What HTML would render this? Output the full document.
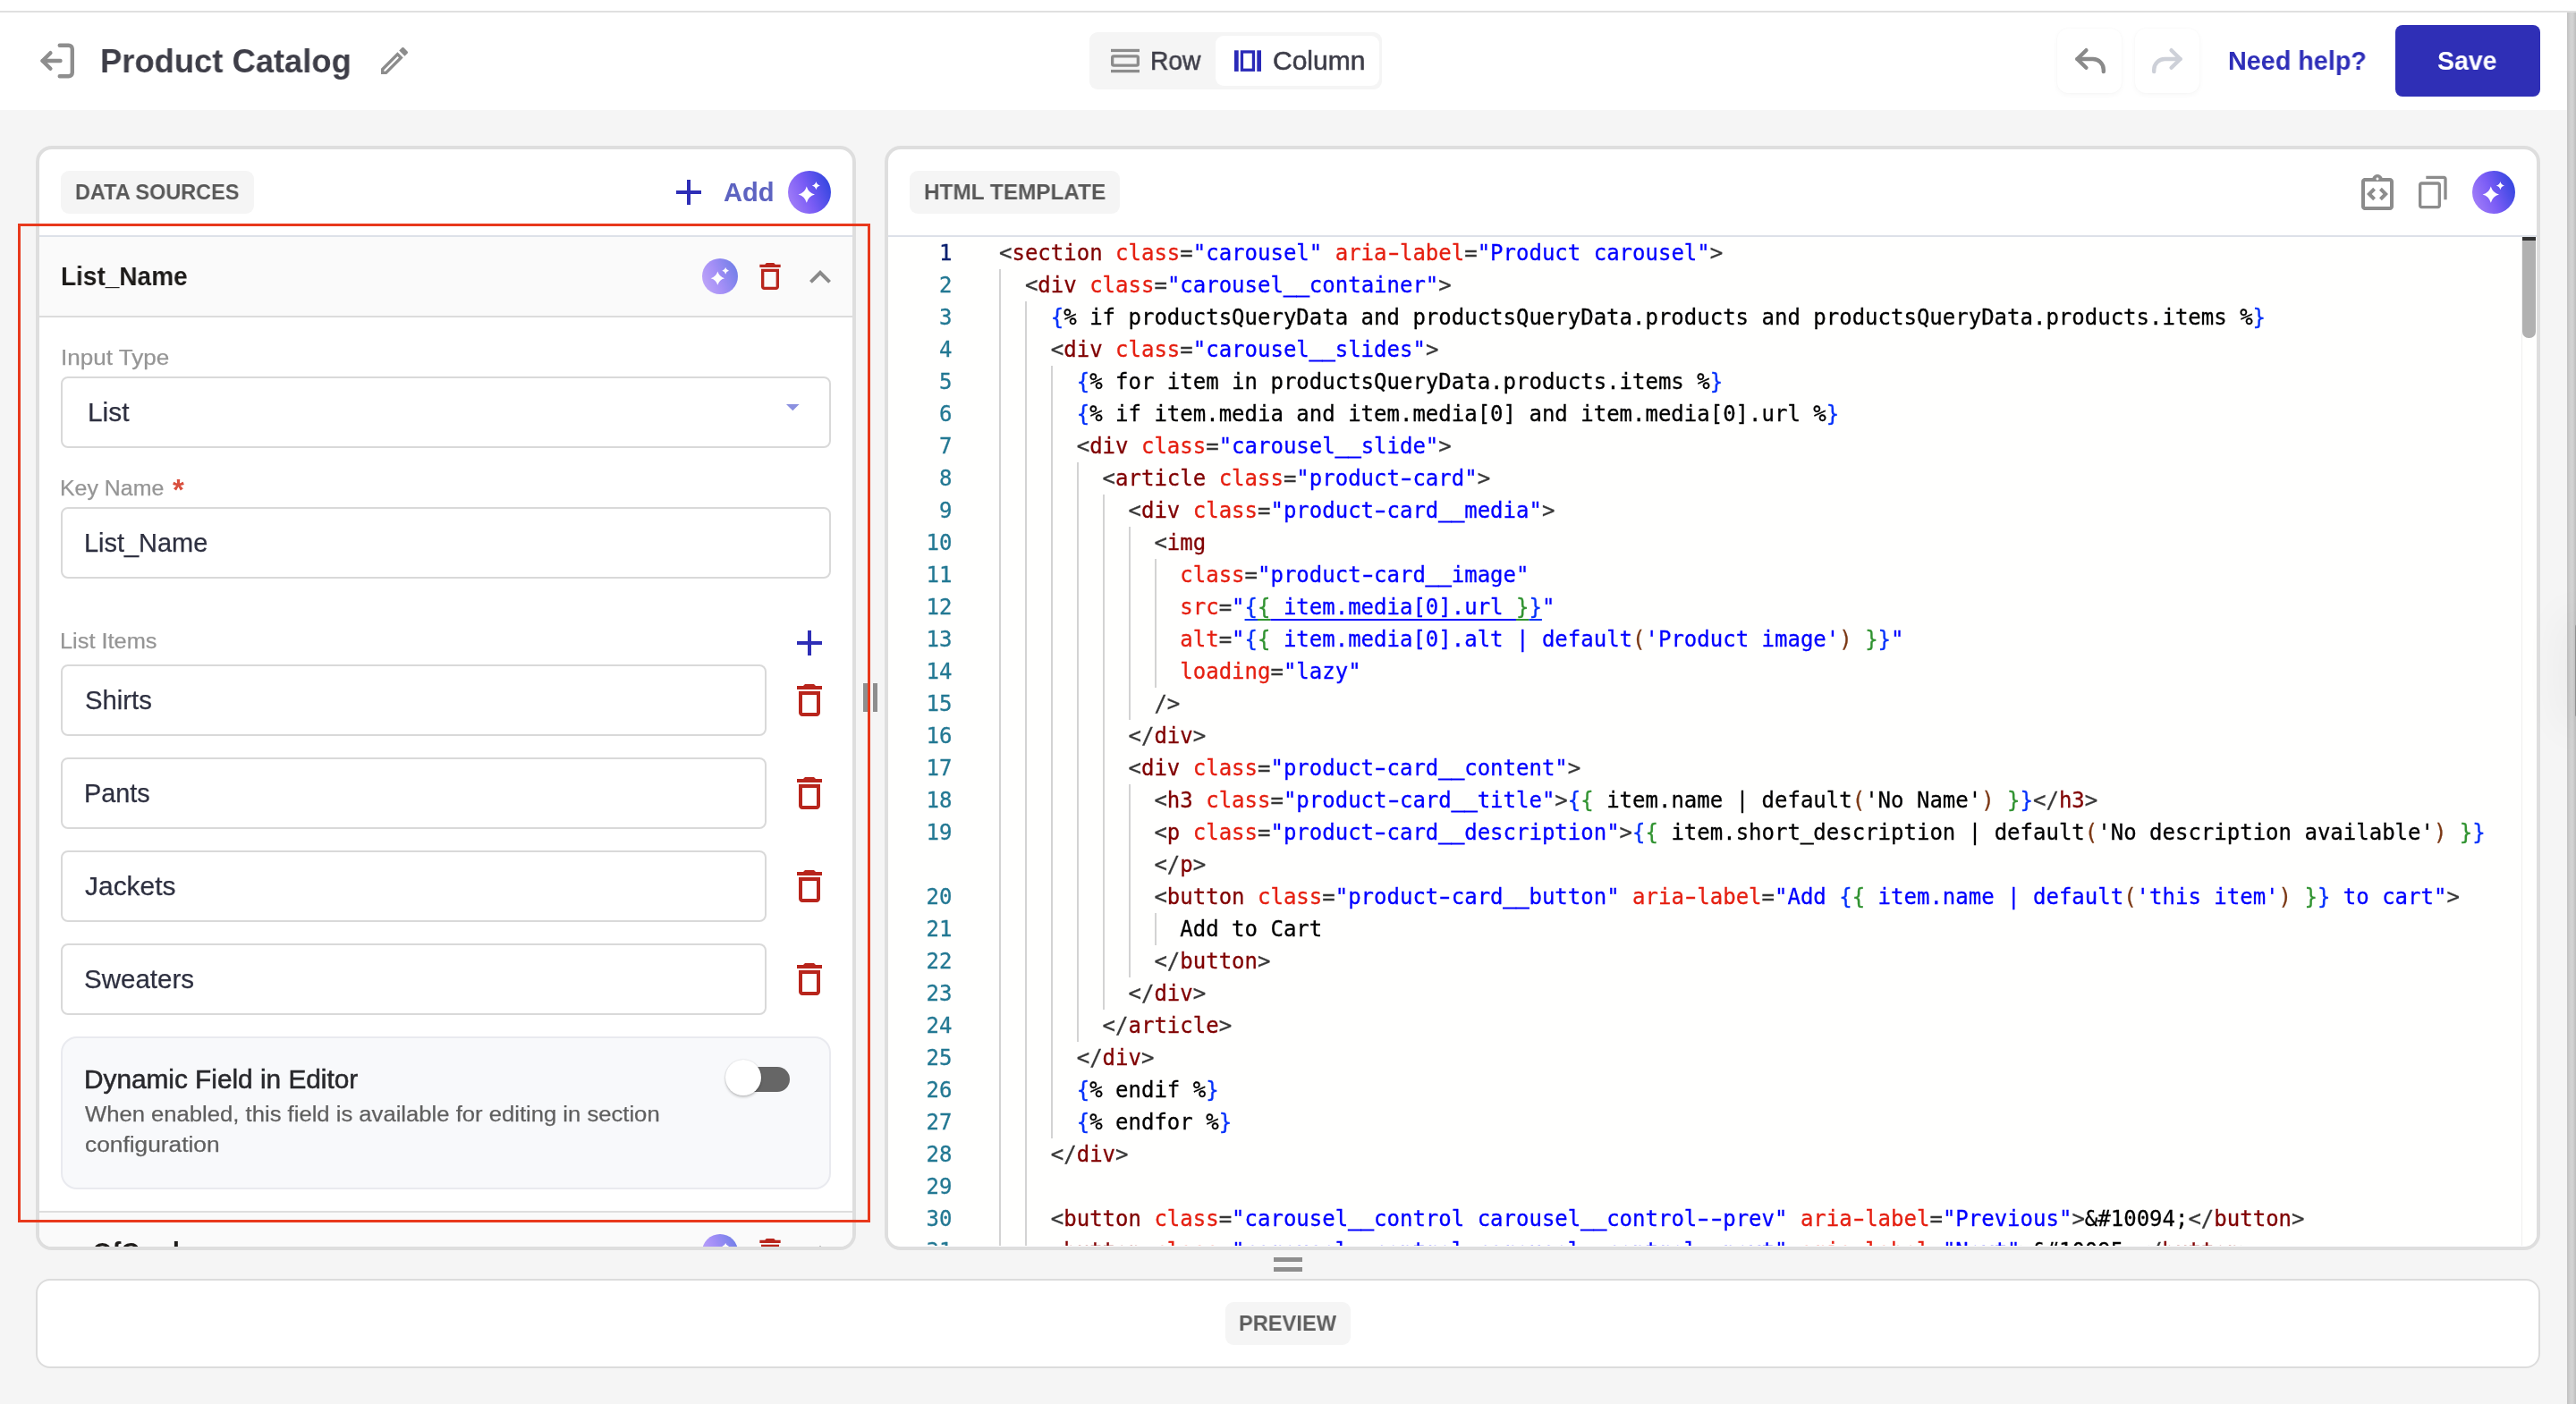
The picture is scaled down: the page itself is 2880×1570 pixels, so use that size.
<!DOCTYPE html>
<html lang="en"><head><meta charset="utf-8"><title>Product Catalog</title>
<style>
html,body{margin:0;padding:0}
body{width:2880px;height:1570px;overflow:hidden;background:#f5f5f5;position:relative;font-family:"Liberation Sans", sans-serif}
.abs{position:absolute}
.panel{box-sizing:border-box;border:4px solid #dedede;border-radius:18px;background:#fff;overflow:hidden}
.inp{box-sizing:border-box;border:2px solid #d9d9d9;border-radius:8px;background:#fff}
.t{position:absolute;white-space:pre;line-height:1;will-change:transform;transform-origin:0 0}
.ln{position:absolute;will-change:transform;-webkit-text-stroke:0.3px;left:0;width:71.5px;text-align:right;height:36px;line-height:36px;font:24px/36px "DejaVu Sans Mono", "Liberation Mono", monospace}
.cl{position:absolute;height:36px;white-space:pre;will-change:transform;-webkit-text-stroke:0.3px;font:24px/36px "DejaVu Sans Mono", "Liberation Mono", monospace}
.u span{text-decoration:underline;text-underline-offset:5px;text-decoration-thickness:2px}
.hy{font-style:normal;display:inline-block;transform:scaleX(1.55)}
.us{font-style:normal;display:inline-block;-webkit-text-stroke:0.9px;transform:translateY(-1.5px)}
.gd{position:absolute;width:2px;height:36px;background:#d3d3d3}
</style></head>
<body>
<div class="abs" style="left:0;top:0;width:2880px;height:12px;background:#fff"></div>
<div class="abs" style="left:0;top:14px;width:2870px;height:109px;background:#fff"></div>
<div class="abs" style="left:0;top:12px;width:2880px;height:2px;background:#e0e0e0"></div>
<div class="abs" style="left:2870px;top:14px;width:10px;height:1556px;background:linear-gradient(90deg,#c2c2c2 0,#d0d0d0 35%,#d4d4d4 60%,#bdbdbd 100%)"></div>
<svg class="abs" style="left:40px;top:40px" width="56" height="56" viewBox="40 40 56 56" fill="none" stroke="#8e8e8e" stroke-width="4.4" stroke-linecap="round" stroke-linejoin="round"><path d="M66.7,50.7H76.8a4,4 0 0 1 4,4V81.3a4,4 0 0 1 -4,4H66.7"/><path d="M67.5,68H47.6"/><path d="M56.4,59.2L47.6,68L56.4,76.8"/></svg>
<div class="t" id="t0" style="left:112.00px;top:50.00px;font-size:37.08px;font-weight:700;color:#3e3e48;transform:scaleX(0.9805);">Product Catalog</div>
<svg style="position:absolute;left:421px;top:48px" width="40" height="40" viewBox="0 0 24 24" ><path fill="#8c8c8c" d="m14.06 9.02.92.92L5.92 19H5v-.92zM17.66 3c-.25 0-.51.1-.7.29l-1.83 1.83 3.75 3.75 1.83-1.83c.39-.39.39-1.02 0-1.41l-2.34-2.34c-.2-.2-.45-.29-.71-.29m-3.6 3.19L3 17.25V21h3.75L17.81 9.94z"/></svg>
<div class="abs" style="left:1218px;top:36px;width:327px;height:64px;background:#f5f5f5;border-radius:9px"></div>
<div class="abs" style="left:1359px;top:40px;width:183px;height:56px;background:#fff;border-radius:9px"></div>
<svg class="abs" style="left:1236px;top:48px" width="44" height="40" viewBox="1236 48 44 40"><rect x="1242" y="54.8" width="32" height="3.3" fill="#8c8c8c"/><rect x="1243.65" y="62.9" width="28.7" height="10.2" rx="1.6" fill="none" stroke="#8c8c8c" stroke-width="3.3"/><rect x="1242" y="77.9" width="32" height="3.3" fill="#8c8c8c"/></svg>
<div class="t" id="t1" style="left:1285.60px;top:54.00px;font-size:28.84px;font-weight:400;color:#3d3d48;transform:scaleX(0.9787);-webkit-text-stroke:0.55px #3d3d48;">Row</div>
<svg class="abs" style="left:1376px;top:50px" width="40" height="36" viewBox="1376 50 40 36"><rect x="1380" y="56.3" width="4.7" height="23.6" fill="#2a2ab8"/><rect x="1388.45" y="57.95" width="13" height="20.3" fill="none" stroke="#2a2ab8" stroke-width="3.3"/><rect x="1405.3" y="56.3" width="4.7" height="23.6" fill="#2a2ab8"/></svg>
<div class="t" id="t2" style="left:1423.00px;top:54.00px;font-size:28.84px;font-weight:400;color:#3d3d48;transform:scaleX(1.0412);-webkit-text-stroke:0.55px #3d3d48;">Column</div>
<div class="abs" style="left:2300px;top:32px;width:72px;height:72px;background:#fff;border-radius:12px;box-shadow:0 2px 6px rgba(0,0,0,.035),0 0 2px rgba(0,0,0,.035)"></div>
<div class="abs" style="left:2387px;top:32px;width:72px;height:72px;background:#fff;border-radius:12px;box-shadow:0 2px 6px rgba(0,0,0,.035),0 0 2px rgba(0,0,0,.035)"></div>
<svg class="abs" style="left:2312px;top:44px" width="48" height="48" viewBox="2312 44 48 48" fill="none" stroke="#8a8a8a" stroke-width="4.4" stroke-linecap="round" stroke-linejoin="round"><path d="M2351.8,80v-2a12,12 0 0 0 -12,-12H2322.4"/><path d="M2332.4,56.2L2322.4,66L2332.4,75.8"/></svg>
<svg class="abs" style="left:2399px;top:44px" width="48" height="48" viewBox="2399 44 48 48" fill="none" stroke="#cdd0d8" stroke-width="4.4" stroke-linecap="round" stroke-linejoin="round"><path d="M2408.2,80v-2a12,12 0 0 1 12,-12H2437.6"/><path d="M2427.6,56.2L2437.6,66L2427.6,75.8"/></svg>
<div class="t" id="t3" style="left:2491.00px;top:54.00px;font-size:28.84px;font-weight:700;color:#2e2eb8;transform:scaleX(0.9967);">Need help?</div>
<div class="abs" style="left:2678px;top:28px;width:162px;height:80px;background:#2f2fb6;border-radius:8px"></div>
<div class="t" id="t4" style="left:2725.40px;top:54.00px;font-size:28.84px;font-weight:700;color:#fff;transform:scaleX(0.9878);">Save</div>
<div class="abs panel" style="left:40px;top:163px;width:917px;height:1235px">
<div class="abs" style="left:24px;top:24px;width:216px;height:48px;background:#f5f5f5;border-radius:9px"></div>
<div class="t" id="t5" style="left:39.80px;top:36.00px;font-size:24.72px;font-weight:700;color:#585858;transform:scaleX(0.9492);">DATA SOURCES</div>
<svg style="position:absolute;left:702px;top:24px" width="48" height="48" viewBox="0 0 24 24" ><path fill="#2e2eb6" d="M19 13h-6v6h-2v-6H5v-2h6V5h2v6h6v2z"/></svg>
<div class="t" id="t6" style="left:765.00px;top:34.00px;font-size:28.84px;font-weight:700;color:#5d63c1;transform:scaleX(1.0095);">Add</div>
<svg style="position:absolute;left:837px;top:24px;opacity:1" width="48" height="48" viewBox="0 0 48 48"><defs><linearGradient id="ga" x1="0.02" y1="0.7" x2="0.98" y2="0.3"><stop offset="0" stop-color="#a07cf8"/><stop offset="0.45" stop-color="#7a5cf5"/><stop offset="1" stop-color="#3446e0"/></linearGradient></defs><circle cx="24.0" cy="24.0" r="24.0" fill="url(#ga)"/><path d="M20.8,17.400000000000002 Q22.824,24.576 30.0,26.6 Q22.824,28.624000000000002 20.8,35.8 Q18.776,28.624000000000002 11.600000000000001,26.6 Q18.776,24.576 20.8,17.400000000000002Z" fill="#fff"/><path d="M31.4,12.000000000000002 Q32.32,15.680000000000001 36.0,16.6 Q32.32,17.520000000000003 31.4,21.200000000000003 Q30.479999999999997,17.520000000000003 26.799999999999997,16.6 Q30.479999999999997,15.680000000000001 31.4,12.000000000000002Z" fill="#fff"/></svg>
<div class="abs" style="left:0;top:96px;width:909px;height:2px;background:#dde1e8"></div>
<div class="abs" style="left:0;top:98px;width:909px;height:88px;background:#fafafa"></div>
<div class="abs" style="left:0;top:186px;width:909px;height:2px;background:#dcdcdc"></div>
<div class="t" id="t7" style="left:23.60px;top:127.80px;font-size:28.84px;font-weight:700;color:#1d1b19;transform:scaleX(0.9713);">List_Name</div>
<svg style="position:absolute;left:741px;top:122px;opacity:0.68" width="40" height="40" viewBox="0 0 40 40"><defs><linearGradient id="gb" x1="0.02" y1="0.7" x2="0.98" y2="0.3"><stop offset="0" stop-color="#a07cf8"/><stop offset="0.45" stop-color="#7a5cf5"/><stop offset="1" stop-color="#3446e0"/></linearGradient></defs><circle cx="20.0" cy="20.0" r="20.0" fill="url(#gb)"/><path d="M17.333333333333336,14.500000000000002 Q19.020000000000003,20.48 25.0,22.166666666666668 Q19.020000000000003,23.853333333333335 17.333333333333336,29.833333333333336 Q15.646666666666668,23.853333333333335 9.66666666666667,22.166666666666668 Q15.646666666666668,20.48 17.333333333333336,14.500000000000002Z" fill="#fff"/><path d="M26.166666666666668,10.000000000000004 Q26.933333333333334,13.06666666666667 30.0,13.833333333333336 Q26.933333333333334,14.600000000000001 26.166666666666668,17.666666666666668 Q25.400000000000002,14.600000000000001 22.333333333333336,13.833333333333336 Q25.400000000000002,13.06666666666667 26.166666666666668,10.000000000000004Z" fill="#fff"/></svg>
<svg style="position:absolute;left:797px;top:122px" width="40" height="40" viewBox="0 0 24 24" ><path fill="#b8251c" d="M16 9v10H8V9h8m-1.5-6h-5l-1 1H5v2h14V4h-3.5l-1-1zM18 7H6v12c0 1.1.9 2 2 2h8c1.1 0 2-.9 2-2V7z"/></svg>
<svg style="position:absolute;left:849px;top:119px" width="48" height="48" viewBox="0 0 24 24" ><path fill="#8a8a8a" d="m12 8-6 6 1.41 1.41L12 10.83l4.59 4.58L18 14z"/></svg>
<div class="t" id="t8" style="left:23.60px;top:220.70px;font-size:24.72px;font-weight:400;color:#959595;transform:scaleX(1.0536);-webkit-text-stroke:0.25px #959595;">Input Type</div>
<div class="abs inp" style="left:24px;top:254px;width:861px;height:80px"></div>
<div class="t" id="t9" style="left:54.20px;top:280.00px;font-size:28.84px;font-weight:400;color:#2e3040;transform:scaleX(1.0350);-webkit-text-stroke:0.25px #2e3040;">List</div>
<svg class="abs" style="left:826px;top:277px" width="32" height="24" viewBox="870 444 32 24"><path d="M879,452h14.6l-7.3,7.3z" fill="#8b90e0"/></svg>
<div class="t" id="t10" style="left:23.40px;top:366.80px;font-size:24.72px;font-weight:400;color:#959595;transform:scaleX(1.0080);-webkit-text-stroke:0.25px #959595;">Key Name</div>
<div class="t" id="t11" style="left:149.20px;top:364.50px;font-size:32.96px;font-weight:700;color:#d9503f;transform:scaleX(1.0000);">*</div>
<div class="abs inp" style="left:24px;top:400px;width:861px;height:80px"></div>
<div class="t" id="t12" style="left:50.20px;top:426.00px;font-size:28.84px;font-weight:400;color:#2e3040;transform:scaleX(1.0037);-webkit-text-stroke:0.25px #2e3040;">List_Name</div>
<div class="t" id="t13" style="left:23.40px;top:537.80px;font-size:24.72px;font-weight:400;color:#959595;transform:scaleX(1.0253);-webkit-text-stroke:0.25px #959595;">List Items</div>
<svg style="position:absolute;left:837px;top:528px" width="48" height="48" viewBox="0 0 24 24" ><path fill="#2e2eb6" d="M19 13h-6v6h-2v-6H5v-2h6V5h2v6h6v2z"/></svg>
<div class="abs inp" style="left:24px;top:576px;width:789px;height:80px"></div>
<div class="t" id="t14" style="left:50.60px;top:601.80px;font-size:28.84px;font-weight:400;color:#2e3040;transform:scaleX(1.0153);-webkit-text-stroke:0.25px #2e3040;">Shirts</div>
<svg style="position:absolute;left:837px;top:592px" width="48" height="48" viewBox="0 0 24 24" ><path fill="#b8251c" d="M16 9v10H8V9h8m-1.5-6h-5l-1 1H5v2h14V4h-3.5l-1-1zM18 7H6v12c0 1.1.9 2 2 2h8c1.1 0 2-.9 2-2V7z"/></svg>
<div class="abs inp" style="left:24px;top:680px;width:789px;height:80px"></div>
<div class="t" id="t15" style="left:49.80px;top:705.80px;font-size:28.84px;font-weight:400;color:#2e3040;transform:scaleX(1.0000);-webkit-text-stroke:0.25px #2e3040;">Pants</div>
<svg style="position:absolute;left:837px;top:696px" width="48" height="48" viewBox="0 0 24 24" ><path fill="#b8251c" d="M16 9v10H8V9h8m-1.5-6h-5l-1 1H5v2h14V4h-3.5l-1-1zM18 7H6v12c0 1.1.9 2 2 2h8c1.1 0 2-.9 2-2V7z"/></svg>
<div class="abs inp" style="left:24px;top:784px;width:789px;height:80px"></div>
<div class="t" id="t16" style="left:51.40px;top:809.80px;font-size:28.84px;font-weight:400;color:#2e3040;transform:scaleX(1.0392);-webkit-text-stroke:0.25px #2e3040;">Jackets</div>
<svg style="position:absolute;left:837px;top:800px" width="48" height="48" viewBox="0 0 24 24" ><path fill="#b8251c" d="M16 9v10H8V9h8m-1.5-6h-5l-1 1H5v2h14V4h-3.5l-1-1zM18 7H6v12c0 1.1.9 2 2 2h8c1.1 0 2-.9 2-2V7z"/></svg>
<div class="abs inp" style="left:24px;top:888px;width:789px;height:80px"></div>
<div class="t" id="t17" style="left:50.40px;top:913.80px;font-size:28.84px;font-weight:400;color:#2e3040;transform:scaleX(1.0244);-webkit-text-stroke:0.25px #2e3040;">Sweaters</div>
<svg style="position:absolute;left:837px;top:904px" width="48" height="48" viewBox="0 0 24 24" ><path fill="#b8251c" d="M16 9v10H8V9h8m-1.5-6h-5l-1 1H5v2h14V4h-3.5l-1-1zM18 7H6v12c0 1.1.9 2 2 2h8c1.1 0 2-.9 2-2V7z"/></svg>
<div class="abs" style="left:24px;top:992px;width:861px;height:171px;background:#f8f9fb;border:2px solid #e9eaef;border-radius:18px;box-sizing:border-box"></div>
<div class="t" id="t18" style="left:49.60px;top:1025.80px;font-size:28.84px;font-weight:400;color:#29292d;transform:scaleX(1.0330);-webkit-text-stroke:0.55px #29292d;">Dynamic Field in Editor</div>
<div class="t" id="t19" style="left:50.60px;top:1067.00px;font-size:24.72px;font-weight:400;color:#5f5f5f;transform:scaleX(1.0370);-webkit-text-stroke:0.25px #5f5f5f;">When enabled, this field is available for editing in section</div>
<div class="t" id="t20" style="left:50.60px;top:1101.00px;font-size:24.72px;font-weight:400;color:#5f5f5f;transform:scaleX(1.0640);-webkit-text-stroke:0.25px #5f5f5f;">configuration</div>
<div class="abs" style="left:773px;top:1026px;width:66px;height:28px;background:#666;border-radius:14px"></div>
<div class="abs" style="left:767px;top:1018.3px;width:40px;height:40px;background:#fff;border-radius:20px;box-shadow:0 2px 3px rgba(0,0,0,.2),0 0 2px rgba(0,0,0,.16)"></div>
<div class="abs" style="left:0;top:1187px;width:909px;height:2px;background:#dedede"></div>
<div class="abs" style="left:0;top:1189px;width:909px;height:60px;background:#fafafa"></div>
<div class="t" id="t21" style="left:23.60px;top:1219.00px;font-size:28.84px;font-weight:700;color:#1d1b19;transform:scaleX(1.0000);">noOfCards</div>
<svg style="position:absolute;left:741px;top:1213px;opacity:0.68" width="40" height="40" viewBox="0 0 40 40"><defs><linearGradient id="gc" x1="0.02" y1="0.7" x2="0.98" y2="0.3"><stop offset="0" stop-color="#a07cf8"/><stop offset="0.45" stop-color="#7a5cf5"/><stop offset="1" stop-color="#3446e0"/></linearGradient></defs><circle cx="20.0" cy="20.0" r="20.0" fill="url(#gc)"/><path d="M17.333333333333336,14.500000000000002 Q19.020000000000003,20.48 25.0,22.166666666666668 Q19.020000000000003,23.853333333333335 17.333333333333336,29.833333333333336 Q15.646666666666668,23.853333333333335 9.66666666666667,22.166666666666668 Q15.646666666666668,20.48 17.333333333333336,14.500000000000002Z" fill="#fff"/><path d="M26.166666666666668,10.000000000000004 Q26.933333333333334,13.06666666666667 30.0,13.833333333333336 Q26.933333333333334,14.600000000000001 26.166666666666668,17.666666666666668 Q25.400000000000002,14.600000000000001 22.333333333333336,13.833333333333336 Q25.400000000000002,13.06666666666667 26.166666666666668,10.000000000000004Z" fill="#fff"/></svg>
<svg style="position:absolute;left:797px;top:1213px" width="40" height="40" viewBox="0 0 24 24" ><path fill="#b8251c" d="M16 9v10H8V9h8m-1.5-6h-5l-1 1H5v2h14V4h-3.5l-1-1zM18 7H6v12c0 1.1.9 2 2 2h8c1.1 0 2-.9 2-2V7z"/></svg>
<svg style="position:absolute;left:849px;top:1210px" width="48" height="48" viewBox="0 0 24 24" ><path fill="#8a8a8a" d="m12 8-6 6 1.41 1.41L12 10.83l4.59 4.58L18 14z"/></svg>
</div>
<div class="abs panel" style="left:989px;top:163px;width:1851px;height:1235px">
<div class="abs" style="left:24px;top:24px;width:235px;height:48px;background:#f5f5f5;border-radius:9px"></div>
<div class="t" id="t22" style="left:40.20px;top:36.20px;font-size:24.72px;font-weight:700;color:#585858;transform:scaleX(0.9844);">HTML TEMPLATE</div>
<svg class="abs" style="left:1641px;top:26px" width="48" height="48" viewBox="0 0 24 24"><path fill="#8c8c8c" d="m11 14.17-1.41 1.42L6 12l3.59-3.59L11 9.83 8.83 12zM13 14.17l1.41 1.42L18 12l-3.59-3.59L13 9.83 15.17 12z"/><path fill="#8c8c8c" d="M19 3h-4.18C14.4 1.84 13.3 1 12 1s-2.4.84-2.82 2H5c-.14 0-.27.01-.4.04-.39.08-.74.28-1.01.55-.18.18-.33.4-.43.64-.1.23-.16.49-.16.77v14c0 .27.06.54.16.78s.25.45.43.64c.27.27.62.47 1.01.55.13.02.26.03.4.03h14c1.1 0 2-.9 2-2V5c0-1.1-.9-2-2-2m-7-.25c.41 0 .75.34.75.75s-.34.75-.75.75-.75-.34-.75-.75.34-.75.75-.75M19 19H5V5h14z"/></svg>
<svg class="abs" style="left:1706px;top:28px" width="40" height="40" viewBox="0 0 24 24"><path transform="translate(24,0) scale(-1,1)" fill="#8c8c8c" d="M16 1H4c-1.1 0-2 .9-2 2v14h2V3h12V1zm3 4H8c-1.1 0-2 .9-2 2v14c0 1.1.9 2 2 2h11c1.1 0 2-.9 2-2V7c0-1.1-.9-2-2-2zm0 16H8V7h11v14z"/></svg>
<svg style="position:absolute;left:1771px;top:24px;opacity:1" width="48" height="48" viewBox="0 0 48 48"><defs><linearGradient id="gd" x1="0.02" y1="0.7" x2="0.98" y2="0.3"><stop offset="0" stop-color="#a07cf8"/><stop offset="0.45" stop-color="#7a5cf5"/><stop offset="1" stop-color="#3446e0"/></linearGradient></defs><circle cx="24.0" cy="24.0" r="24.0" fill="url(#gd)"/><path d="M20.8,17.400000000000002 Q22.824,24.576 30.0,26.6 Q22.824,28.624000000000002 20.8,35.8 Q18.776,28.624000000000002 11.600000000000001,26.6 Q18.776,24.576 20.8,17.400000000000002Z" fill="#fff"/><path d="M31.4,12.000000000000002 Q32.32,15.680000000000001 36.0,16.6 Q32.32,17.520000000000003 31.4,21.200000000000003 Q30.479999999999997,17.520000000000003 26.799999999999997,16.6 Q30.479999999999997,15.680000000000001 31.4,12.000000000000002Z" fill="#fff"/></svg>
<div class="abs" style="left:0;top:96px;width:1843px;height:2px;background:#dde1e8"></div>
<div class="abs" id="ed" style="left:0;top:98px;width:1843px;height:1128px;background:#fffffe;overflow:hidden"><div class="ln" style="top:0px;color:#0b216f">1</div><div class="cl" style="top:0px;left:123.50px"><span style="color:#383838">&lt;</span><span style="color:#800000">section</span> <span style="color:#e51f10">class</span><span style="color:#383838">=</span><span style="color:#0000ff">"carousel"</span> <span style="color:#e51f10">aria<i class="hy">-</i>label</span><span style="color:#383838">=</span><span style="color:#0000ff">"Product carousel"</span><span style="color:#383838">&gt;</span></div><div class="ln" style="top:36px;color:#237893">2</div><div class="gd" style="top:36px;left:124px"></div><div class="cl" style="top:36px;left:123.50px">  <span style="color:#383838">&lt;</span><span style="color:#800000">div</span> <span style="color:#e51f10">class</span><span style="color:#383838">=</span><span style="color:#0000ff">"carousel<i class="us">_</i><i class="us">_</i>container"</span><span style="color:#383838">&gt;</span></div><div class="ln" style="top:72px;color:#237893">3</div><div class="gd" style="top:72px;left:124px"></div><div class="gd" style="top:72px;left:153px"></div><div class="cl" style="top:72px;left:123.50px">    <span style="color:#0431fa">{</span><span style="color:#000">% if productsQueryData and productsQueryData.products and productsQueryData.products.items %</span><span style="color:#0431fa">}</span></div><div class="ln" style="top:108px;color:#237893">4</div><div class="gd" style="top:108px;left:124px"></div><div class="gd" style="top:108px;left:153px"></div><div class="cl" style="top:108px;left:123.50px">    <span style="color:#383838">&lt;</span><span style="color:#800000">div</span> <span style="color:#e51f10">class</span><span style="color:#383838">=</span><span style="color:#0000ff">"carousel<i class="us">_</i><i class="us">_</i>slides"</span><span style="color:#383838">&gt;</span></div><div class="ln" style="top:144px;color:#237893">5</div><div class="gd" style="top:144px;left:124px"></div><div class="gd" style="top:144px;left:153px"></div><div class="gd" style="top:144px;left:182px"></div><div class="cl" style="top:144px;left:123.50px">      <span style="color:#0431fa">{</span><span style="color:#000">% for item in productsQueryData.products.items %</span><span style="color:#0431fa">}</span></div><div class="ln" style="top:180px;color:#237893">6</div><div class="gd" style="top:180px;left:124px"></div><div class="gd" style="top:180px;left:153px"></div><div class="gd" style="top:180px;left:182px"></div><div class="cl" style="top:180px;left:123.50px">      <span style="color:#0431fa">{</span><span style="color:#000">% if item.media and item.media[0] and item.media[0].url %</span><span style="color:#0431fa">}</span></div><div class="ln" style="top:216px;color:#237893">7</div><div class="gd" style="top:216px;left:124px"></div><div class="gd" style="top:216px;left:153px"></div><div class="gd" style="top:216px;left:182px"></div><div class="cl" style="top:216px;left:123.50px">      <span style="color:#383838">&lt;</span><span style="color:#800000">div</span> <span style="color:#e51f10">class</span><span style="color:#383838">=</span><span style="color:#0000ff">"carousel<i class="us">_</i><i class="us">_</i>slide"</span><span style="color:#383838">&gt;</span></div><div class="ln" style="top:252px;color:#237893">8</div><div class="gd" style="top:252px;left:124px"></div><div class="gd" style="top:252px;left:153px"></div><div class="gd" style="top:252px;left:182px"></div><div class="gd" style="top:252px;left:211px"></div><div class="cl" style="top:252px;left:123.50px">        <span style="color:#383838">&lt;</span><span style="color:#800000">article</span> <span style="color:#e51f10">class</span><span style="color:#383838">=</span><span style="color:#0000ff">"product<i class="hy">-</i>card"</span><span style="color:#383838">&gt;</span></div><div class="ln" style="top:288px;color:#237893">9</div><div class="gd" style="top:288px;left:124px"></div><div class="gd" style="top:288px;left:153px"></div><div class="gd" style="top:288px;left:182px"></div><div class="gd" style="top:288px;left:211px"></div><div class="gd" style="top:288px;left:240px"></div><div class="cl" style="top:288px;left:123.50px">          <span style="color:#383838">&lt;</span><span style="color:#800000">div</span> <span style="color:#e51f10">class</span><span style="color:#383838">=</span><span style="color:#0000ff">"product<i class="hy">-</i>card<i class="us">_</i><i class="us">_</i>media"</span><span style="color:#383838">&gt;</span></div><div class="ln" style="top:324px;color:#237893">10</div><div class="gd" style="top:324px;left:124px"></div><div class="gd" style="top:324px;left:153px"></div><div class="gd" style="top:324px;left:182px"></div><div class="gd" style="top:324px;left:211px"></div><div class="gd" style="top:324px;left:240px"></div><div class="gd" style="top:324px;left:269px"></div><div class="cl" style="top:324px;left:123.50px">            <span style="color:#383838">&lt;</span><span style="color:#800000">img</span></div><div class="ln" style="top:360px;color:#237893">11</div><div class="gd" style="top:360px;left:124px"></div><div class="gd" style="top:360px;left:153px"></div><div class="gd" style="top:360px;left:182px"></div><div class="gd" style="top:360px;left:211px"></div><div class="gd" style="top:360px;left:240px"></div><div class="gd" style="top:360px;left:269px"></div><div class="gd" style="top:360px;left:298px"></div><div class="cl" style="top:360px;left:123.50px">              <span style="color:#e51f10">class</span><span style="color:#383838">=</span><span style="color:#0000ff">"product<i class="hy">-</i>card<i class="us">_</i><i class="us">_</i>image"</span></div><div class="ln" style="top:396px;color:#237893">12</div><div class="gd" style="top:396px;left:124px"></div><div class="gd" style="top:396px;left:153px"></div><div class="gd" style="top:396px;left:182px"></div><div class="gd" style="top:396px;left:211px"></div><div class="gd" style="top:396px;left:240px"></div><div class="gd" style="top:396px;left:269px"></div><div class="gd" style="top:396px;left:298px"></div><div class="cl" style="top:396px;left:123.50px">              <span style="color:#e51f10">src</span><span style="color:#383838">=</span><span style="color:#0000ff">"</span><span class="u"><span style="color:#0431fa">{</span><span style="color:#319331">{</span><span style="color:#0000ff"> item.media[0].url </span><span style="color:#319331">}</span><span style="color:#0431fa">}</span></span><span style="color:#0000ff">"</span></div><div class="ln" style="top:432px;color:#237893">13</div><div class="gd" style="top:432px;left:124px"></div><div class="gd" style="top:432px;left:153px"></div><div class="gd" style="top:432px;left:182px"></div><div class="gd" style="top:432px;left:211px"></div><div class="gd" style="top:432px;left:240px"></div><div class="gd" style="top:432px;left:269px"></div><div class="gd" style="top:432px;left:298px"></div><div class="cl" style="top:432px;left:123.50px">              <span style="color:#e51f10">alt</span><span style="color:#383838">=</span><span style="color:#0000ff">"</span><span style="color:#0431fa">{</span><span style="color:#319331">{</span><span style="color:#0000ff"> item.media[0].alt | default</span><span style="color:#7b3814">(</span><span style="color:#0000ff">'Product image'</span><span style="color:#7b3814">)</span><span style="color:#0000ff"> </span><span style="color:#319331">}</span><span style="color:#0431fa">}</span><span style="color:#0000ff">"</span></div><div class="ln" style="top:468px;color:#237893">14</div><div class="gd" style="top:468px;left:124px"></div><div class="gd" style="top:468px;left:153px"></div><div class="gd" style="top:468px;left:182px"></div><div class="gd" style="top:468px;left:211px"></div><div class="gd" style="top:468px;left:240px"></div><div class="gd" style="top:468px;left:269px"></div><div class="gd" style="top:468px;left:298px"></div><div class="cl" style="top:468px;left:123.50px">              <span style="color:#e51f10">loading</span><span style="color:#383838">=</span><span style="color:#0000ff">"lazy"</span></div><div class="ln" style="top:504px;color:#237893">15</div><div class="gd" style="top:504px;left:124px"></div><div class="gd" style="top:504px;left:153px"></div><div class="gd" style="top:504px;left:182px"></div><div class="gd" style="top:504px;left:211px"></div><div class="gd" style="top:504px;left:240px"></div><div class="gd" style="top:504px;left:269px"></div><div class="cl" style="top:504px;left:123.50px">            <span style="color:#383838">/&gt;</span></div><div class="ln" style="top:540px;color:#237893">16</div><div class="gd" style="top:540px;left:124px"></div><div class="gd" style="top:540px;left:153px"></div><div class="gd" style="top:540px;left:182px"></div><div class="gd" style="top:540px;left:211px"></div><div class="gd" style="top:540px;left:240px"></div><div class="cl" style="top:540px;left:123.50px">          <span style="color:#383838">&lt;/</span><span style="color:#800000">div</span><span style="color:#383838">&gt;</span></div><div class="ln" style="top:576px;color:#237893">17</div><div class="gd" style="top:576px;left:124px"></div><div class="gd" style="top:576px;left:153px"></div><div class="gd" style="top:576px;left:182px"></div><div class="gd" style="top:576px;left:211px"></div><div class="gd" style="top:576px;left:240px"></div><div class="cl" style="top:576px;left:123.50px">          <span style="color:#383838">&lt;</span><span style="color:#800000">div</span> <span style="color:#e51f10">class</span><span style="color:#383838">=</span><span style="color:#0000ff">"product<i class="hy">-</i>card<i class="us">_</i><i class="us">_</i>content"</span><span style="color:#383838">&gt;</span></div><div class="ln" style="top:612px;color:#237893">18</div><div class="gd" style="top:612px;left:124px"></div><div class="gd" style="top:612px;left:153px"></div><div class="gd" style="top:612px;left:182px"></div><div class="gd" style="top:612px;left:211px"></div><div class="gd" style="top:612px;left:240px"></div><div class="gd" style="top:612px;left:269px"></div><div class="cl" style="top:612px;left:123.50px">            <span style="color:#383838">&lt;</span><span style="color:#800000">h3</span> <span style="color:#e51f10">class</span><span style="color:#383838">=</span><span style="color:#0000ff">"product<i class="hy">-</i>card<i class="us">_</i><i class="us">_</i>title"</span><span style="color:#383838">&gt;</span><span style="color:#0431fa">{</span><span style="color:#319331">{</span><span style="color:#000"> item.name | default</span><span style="color:#7b3814">(</span><span style="color:#000">'No Name'</span><span style="color:#7b3814">)</span><span style="color:#000"> </span><span style="color:#319331">}</span><span style="color:#0431fa">}</span><span style="color:#383838">&lt;/</span><span style="color:#800000">h3</span><span style="color:#383838">&gt;</span></div><div class="ln" style="top:648px;color:#237893">19</div><div class="gd" style="top:648px;left:124px"></div><div class="gd" style="top:648px;left:153px"></div><div class="gd" style="top:648px;left:182px"></div><div class="gd" style="top:648px;left:211px"></div><div class="gd" style="top:648px;left:240px"></div><div class="gd" style="top:648px;left:269px"></div><div class="cl" style="top:648px;left:123.50px">            <span style="color:#383838">&lt;</span><span style="color:#800000">p</span> <span style="color:#e51f10">class</span><span style="color:#383838">=</span><span style="color:#0000ff">"product<i class="hy">-</i>card<i class="us">_</i><i class="us">_</i>description"</span><span style="color:#383838">&gt;</span><span style="color:#0431fa">{</span><span style="color:#319331">{</span><span style="color:#000"> item.short<i class="us">_</i>description | default</span><span style="color:#7b3814">(</span><span style="color:#000">'No description available'</span><span style="color:#7b3814">)</span><span style="color:#000"> </span><span style="color:#319331">}</span><span style="color:#0431fa">}</span></div><div class="gd" style="top:684px;left:124px"></div><div class="gd" style="top:684px;left:153px"></div><div class="gd" style="top:684px;left:182px"></div><div class="gd" style="top:684px;left:211px"></div><div class="gd" style="top:684px;left:240px"></div><div class="gd" style="top:684px;left:269px"></div><div class="cl" style="top:684px;left:123.50px">            <span style="color:#383838">&lt;/</span><span style="color:#800000">p</span><span style="color:#383838">&gt;</span></div><div class="ln" style="top:720px;color:#237893">20</div><div class="gd" style="top:720px;left:124px"></div><div class="gd" style="top:720px;left:153px"></div><div class="gd" style="top:720px;left:182px"></div><div class="gd" style="top:720px;left:211px"></div><div class="gd" style="top:720px;left:240px"></div><div class="gd" style="top:720px;left:269px"></div><div class="cl" style="top:720px;left:123.50px">            <span style="color:#383838">&lt;</span><span style="color:#800000">button</span> <span style="color:#e51f10">class</span><span style="color:#383838">=</span><span style="color:#0000ff">"product<i class="hy">-</i>card<i class="us">_</i><i class="us">_</i>button"</span> <span style="color:#e51f10">aria<i class="hy">-</i>label</span><span style="color:#383838">=</span><span style="color:#0000ff">"Add </span><span style="color:#0431fa">{</span><span style="color:#319331">{</span><span style="color:#0000ff"> item.name | default</span><span style="color:#7b3814">(</span><span style="color:#0000ff">'this item'</span><span style="color:#7b3814">)</span><span style="color:#0000ff"> </span><span style="color:#319331">}</span><span style="color:#0431fa">}</span><span style="color:#0000ff"> to cart"</span><span style="color:#383838">&gt;</span></div><div class="ln" style="top:756px;color:#237893">21</div><div class="gd" style="top:756px;left:124px"></div><div class="gd" style="top:756px;left:153px"></div><div class="gd" style="top:756px;left:182px"></div><div class="gd" style="top:756px;left:211px"></div><div class="gd" style="top:756px;left:240px"></div><div class="gd" style="top:756px;left:269px"></div><div class="gd" style="top:756px;left:298px"></div><div class="cl" style="top:756px;left:123.50px">              <span style="color:#000">Add to Cart</span></div><div class="ln" style="top:792px;color:#237893">22</div><div class="gd" style="top:792px;left:124px"></div><div class="gd" style="top:792px;left:153px"></div><div class="gd" style="top:792px;left:182px"></div><div class="gd" style="top:792px;left:211px"></div><div class="gd" style="top:792px;left:240px"></div><div class="gd" style="top:792px;left:269px"></div><div class="cl" style="top:792px;left:123.50px">            <span style="color:#383838">&lt;/</span><span style="color:#800000">button</span><span style="color:#383838">&gt;</span></div><div class="ln" style="top:828px;color:#237893">23</div><div class="gd" style="top:828px;left:124px"></div><div class="gd" style="top:828px;left:153px"></div><div class="gd" style="top:828px;left:182px"></div><div class="gd" style="top:828px;left:211px"></div><div class="gd" style="top:828px;left:240px"></div><div class="cl" style="top:828px;left:123.50px">          <span style="color:#383838">&lt;/</span><span style="color:#800000">div</span><span style="color:#383838">&gt;</span></div><div class="ln" style="top:864px;color:#237893">24</div><div class="gd" style="top:864px;left:124px"></div><div class="gd" style="top:864px;left:153px"></div><div class="gd" style="top:864px;left:182px"></div><div class="gd" style="top:864px;left:211px"></div><div class="cl" style="top:864px;left:123.50px">        <span style="color:#383838">&lt;/</span><span style="color:#800000">article</span><span style="color:#383838">&gt;</span></div><div class="ln" style="top:900px;color:#237893">25</div><div class="gd" style="top:900px;left:124px"></div><div class="gd" style="top:900px;left:153px"></div><div class="gd" style="top:900px;left:182px"></div><div class="cl" style="top:900px;left:123.50px">      <span style="color:#383838">&lt;/</span><span style="color:#800000">div</span><span style="color:#383838">&gt;</span></div><div class="ln" style="top:936px;color:#237893">26</div><div class="gd" style="top:936px;left:124px"></div><div class="gd" style="top:936px;left:153px"></div><div class="gd" style="top:936px;left:182px"></div><div class="cl" style="top:936px;left:123.50px">      <span style="color:#0431fa">{</span><span style="color:#000">% endif %</span><span style="color:#0431fa">}</span></div><div class="ln" style="top:972px;color:#237893">27</div><div class="gd" style="top:972px;left:124px"></div><div class="gd" style="top:972px;left:153px"></div><div class="gd" style="top:972px;left:182px"></div><div class="cl" style="top:972px;left:123.50px">      <span style="color:#0431fa">{</span><span style="color:#000">% endfor %</span><span style="color:#0431fa">}</span></div><div class="ln" style="top:1008px;color:#237893">28</div><div class="gd" style="top:1008px;left:124px"></div><div class="gd" style="top:1008px;left:153px"></div><div class="cl" style="top:1008px;left:123.50px">    <span style="color:#383838">&lt;/</span><span style="color:#800000">div</span><span style="color:#383838">&gt;</span></div><div class="ln" style="top:1044px;color:#237893">29</div><div class="gd" style="top:1044px;left:124px"></div><div class="gd" style="top:1044px;left:153px"></div><div class="cl" style="top:1044px;left:123.50px"></div><div class="ln" style="top:1080px;color:#237893">30</div><div class="gd" style="top:1080px;left:124px"></div><div class="gd" style="top:1080px;left:153px"></div><div class="cl" style="top:1080px;left:123.50px">    <span style="color:#383838">&lt;</span><span style="color:#800000">button</span> <span style="color:#e51f10">class</span><span style="color:#383838">=</span><span style="color:#0000ff">"carousel<i class="us">_</i><i class="us">_</i>control carousel<i class="us">_</i><i class="us">_</i>control<i class="hy">-</i><i class="hy">-</i>prev"</span> <span style="color:#e51f10">aria<i class="hy">-</i>label</span><span style="color:#383838">=</span><span style="color:#0000ff">"Previous"</span><span style="color:#383838">&gt;</span><span style="color:#000">&amp;#10094;</span><span style="color:#383838">&lt;/</span><span style="color:#800000">button</span><span style="color:#383838">&gt;</span></div><div class="ln" style="top:1116px;color:#237893">31</div><div class="gd" style="top:1116px;left:124px"></div><div class="gd" style="top:1116px;left:153px"></div><div class="cl" style="top:1116px;left:123.50px">    <span style="color:#383838">&lt;</span><span style="color:#800000">button</span> <span style="color:#e51f10">class</span><span style="color:#383838">=</span><span style="color:#0000ff">"carousel<i class="us">_</i><i class="us">_</i>control carousel<i class="us">_</i><i class="us">_</i>control<i class="hy">-</i><i class="hy">-</i>next"</span> <span style="color:#e51f10">aria<i class="hy">-</i>label</span><span style="color:#383838">=</span><span style="color:#0000ff">"Next"</span><span style="color:#383838">&gt;</span><span style="color:#000">&amp;#10095;</span><span style="color:#383838">&lt;/</span><span style="color:#800000">button</span><span style="color:#383838">&gt;</span></div><div class="abs" style="left:1826px;top:0;width:1px;height:1129px;background:#efefef"></div><div class="abs" style="left:1826.6px;top:4px;width:15.4px;height:109px;background:#b1b1b1;border-radius:0 0 7px 7px"></div><div class="abs" style="left:1826.6px;top:0;width:15.4px;height:4px;background:#333"></div></div>
</div>
<div class="abs" style="left:965px;top:764px;width:5px;height:32px;background:#8e8e8e"></div>
<div class="abs" style="left:976px;top:764px;width:5px;height:32px;background:#8e8e8e"></div>
<div class="abs" style="left:1424px;top:1406px;width:32px;height:5px;background:#8e8e8e"></div>
<div class="abs" style="left:1424px;top:1417px;width:32px;height:5px;background:#8e8e8e"></div>
<div class="abs" style="left:40px;top:1430px;width:2800px;height:100px;background:#fff;border:2px solid #dcdcdc;border-radius:16px;box-sizing:border-box"></div>
<div class="abs" style="left:1370px;top:1456px;width:140px;height:48px;background:#f5f5f5;border-radius:9px"></div>
<div class="t" id="t23" style="left:1385.00px;top:1467.70px;font-size:24.72px;font-weight:700;color:#5e5e5e;transform:scaleX(0.9558);">PREVIEW</div>
<div class="abs" style="left:2878.5px;top:698px;width:6px;height:104px;background:#8f8f8f;border-radius:4px;box-shadow:0 0 50px 12px rgba(0,0,0,.06)"></div>
<div class="abs" style="left:20px;top:250px;width:953px;height:1117px;border:3px solid #e8391c;box-sizing:border-box"></div>
</body></html>
